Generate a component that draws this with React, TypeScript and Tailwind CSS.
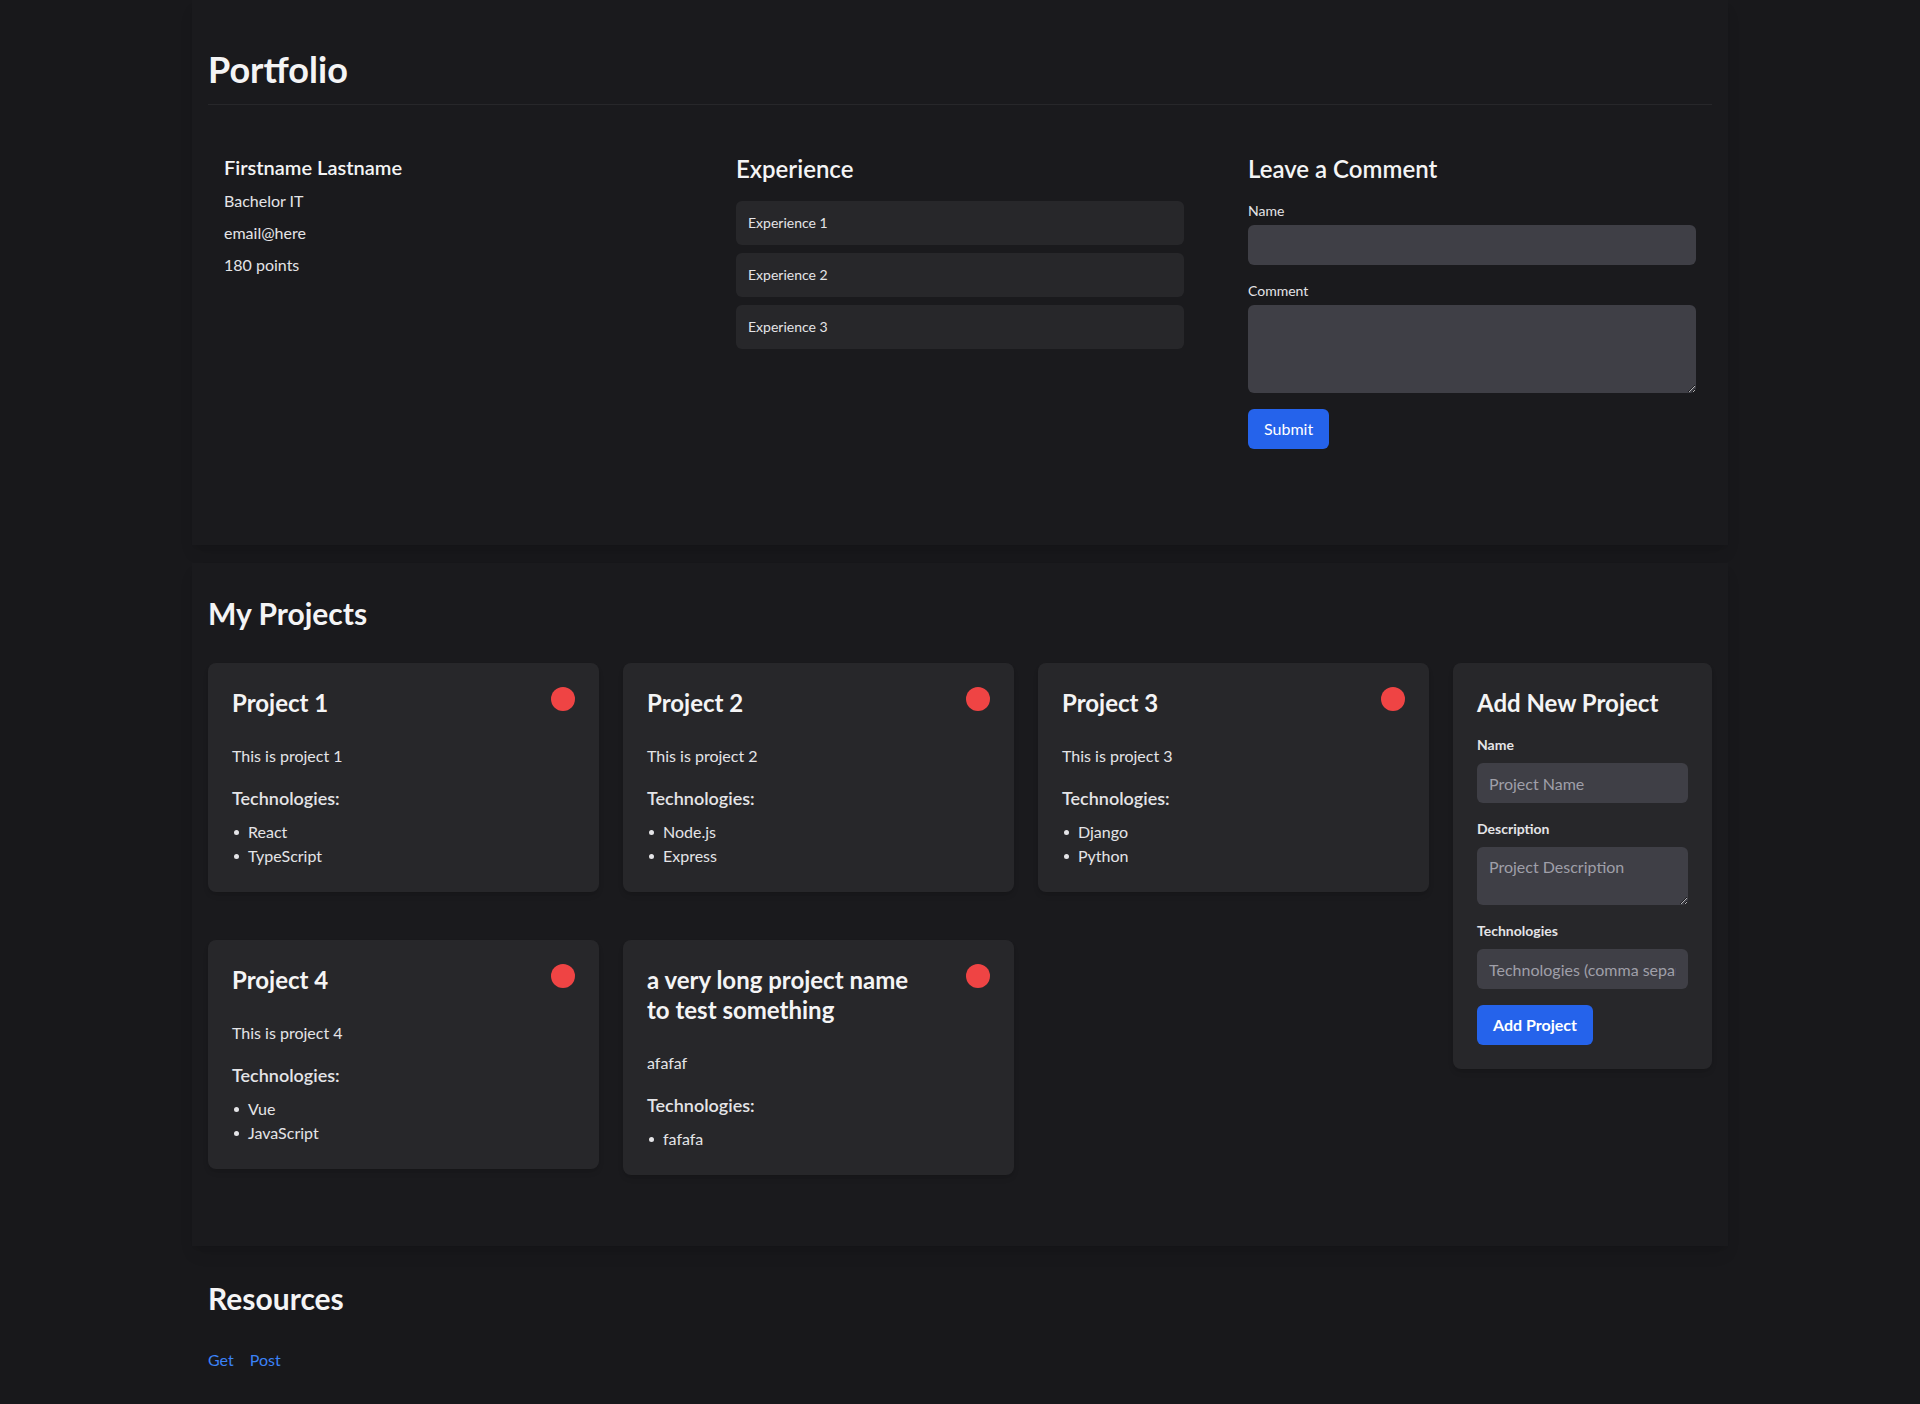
const font = "font-['Segoe_UI','Lato','Liberation_Sans',sans-serif]";

const experiences = ["Experience 1", "Experience 2", "Experience 3"];

const projects = [
  { name: "Project 1", description: "This is project 1", technologies: ["React", "TypeScript"] },
  { name: "Project 2", description: "This is project 2", technologies: ["Node.js", "Express"] },
  { name: "Project 3", description: "This is project 3", technologies: ["Django", "Python"] },
  { name: "Project 4", description: "This is project 4", technologies: ["Vue", "JavaScript"] },
  { name: "a very long project name to test something", description: "afafaf", technologies: ["fafafa"] },
];

type Project = (typeof projects)[number];

function ProjectCard({ project }: { project: Project }) {
  return (
    <div className="rounded-lg bg-[#27272a] p-6 shadow-md">
      <div className="flex items-start justify-between gap-4">
        <h3 className="max-w-[275px] pt-[1px] text-2xl leading-[30px] font-bold text-zinc-100">{project.name}</h3>
        <button aria-label="Delete project" className="h-6 w-6 shrink-0 rounded-full bg-[#ef4444]" />
      </div>
      <p className="mt-[26px] text-base leading-6 text-zinc-200">{project.description}</p>
      <h4 className="mt-4 text-lg leading-7 font-semibold text-zinc-200">Technologies:</h4>
      <ul className="mt-2 text-base leading-6 text-zinc-200">
        {project.technologies.map((tech) => (
          <li key={tech} className="flex items-center">
            <span className="mr-[9px] ml-[2px] h-[5px] w-[5px] rounded-full bg-zinc-200" />
            {tech}
          </li>
        ))}
      </ul>
    </div>
  );
}

function AddProjectForm() {
  return (
    <div className="w-[259px] shrink-0 self-start rounded-lg bg-[#27272a] p-6 shadow-md">
      <h3 className="text-2xl leading-8 font-bold text-zinc-100">Add New Project</h3>
      <label className="mt-4 block text-sm leading-5 font-bold text-zinc-200">Name</label>
      <input
        placeholder="Project Name"
        className="mt-2 block h-10 w-full rounded-md bg-[#3f3f46] px-3 text-base text-zinc-100 placeholder-zinc-400 outline-none"
      />
      <label className="mt-4 block text-sm leading-5 font-bold text-zinc-200">Description</label>
      <textarea
        placeholder="Project Description"
        className="mt-2 block h-[58px] w-full rounded-md bg-[#3f3f46] px-3 py-2 text-base leading-6 text-zinc-100 placeholder-zinc-400 outline-none"
      />
      <label className="mt-4 block text-sm leading-5 font-bold text-zinc-200">Technologies</label>
      <input
        placeholder="Technologies (comma separated)"
        className="mt-2 block h-10 w-full rounded-md bg-[#3f3f46] px-3 text-base text-zinc-100 placeholder-zinc-400 outline-none"
      />
      <button className="mt-4 h-10 rounded-md bg-[#2563eb] px-4 text-base font-bold text-white">Add Project</button>
    </div>
  );
}

export default function App() {
  return (
    <div className={`min-h-[1404px] bg-[#18181b] ${font}`}>
      {/* Portfolio */}
      <section className="mx-auto max-w-[1536px] bg-[#1a1a1d] px-4 pt-[49px] pb-20 shadow-lg">
        <h1 className="border-b border-[#27272a] pb-[15px] text-4xl leading-10 font-bold text-zinc-100">Portfolio</h1>

        <div className="mt-8 grid grid-cols-3 gap-8">
          <div className="p-4">
            <h2 className="text-xl leading-7 font-semibold text-zinc-100">Firstname Lastname</h2>
            <p className="mt-2 text-base leading-6 text-zinc-200">Bachelor IT</p>
            <p className="mt-2 text-base leading-6 text-zinc-200">email@here</p>
            <p className="mt-2 text-base leading-6 text-zinc-200">180 points</p>
          </div>

          <div className="p-4">
            <h2 className="text-2xl leading-8 font-semibold text-zinc-100">Experience</h2>
            <div className="mt-4 flex flex-col gap-2">
              {experiences.map((exp) => (
                <div key={exp} className="rounded-md bg-[#27272a] p-3 text-sm leading-5 text-zinc-200">
                  {exp}
                </div>
              ))}
            </div>
          </div>

          <div className="p-4">
            <h2 className="text-2xl leading-8 font-semibold text-zinc-100">Leave a Comment</h2>
            <label className="mt-4 block text-sm leading-5 text-zinc-200">Name</label>
            <input className="mt-1 block h-10 w-full rounded-md bg-[#3f3f46] px-3 text-zinc-100 outline-none" />
            <label className="mt-4 block text-sm leading-5 text-zinc-200">Comment</label>
            <textarea className="mt-1 block h-[88px] w-full rounded-md bg-[#3f3f46] px-3 py-2 text-zinc-100 outline-none" />
            <button className="mt-4 h-10 rounded-md bg-[#2563eb] px-4 text-base text-white">Submit</button>
          </div>
        </div>
      </section>

      {/* Projects */}
      <section className="mx-auto mt-[18px] max-w-[1536px] bg-[#1a1a1d] px-4 pt-8 pb-[71px] shadow-lg">
        <h2 className="text-3xl leading-9 font-bold text-zinc-100">My Projects</h2>

        <div className="mt-8 flex gap-6">
          <div className="grid flex-1 grid-cols-3 content-start items-start gap-x-6 gap-y-12">
            {projects.map((p) => (
              <ProjectCard key={p.name} project={p} />
            ))}
          </div>
          <AddProjectForm />
        </div>
      </section>

      {/* Resources */}
      <section className="mx-auto max-w-[1536px] px-4 pt-[34px]">
        <h2 className="text-3xl leading-9 font-bold text-zinc-100">Resources</h2>
        <div className="mt-8 flex gap-4 text-base leading-6">
          <a href="#" className="text-[#3b82f6]">Get</a>
          <a href="#" className="text-[#3b82f6]">Post</a>
        </div>
      </section>
    </div>
  );
}
